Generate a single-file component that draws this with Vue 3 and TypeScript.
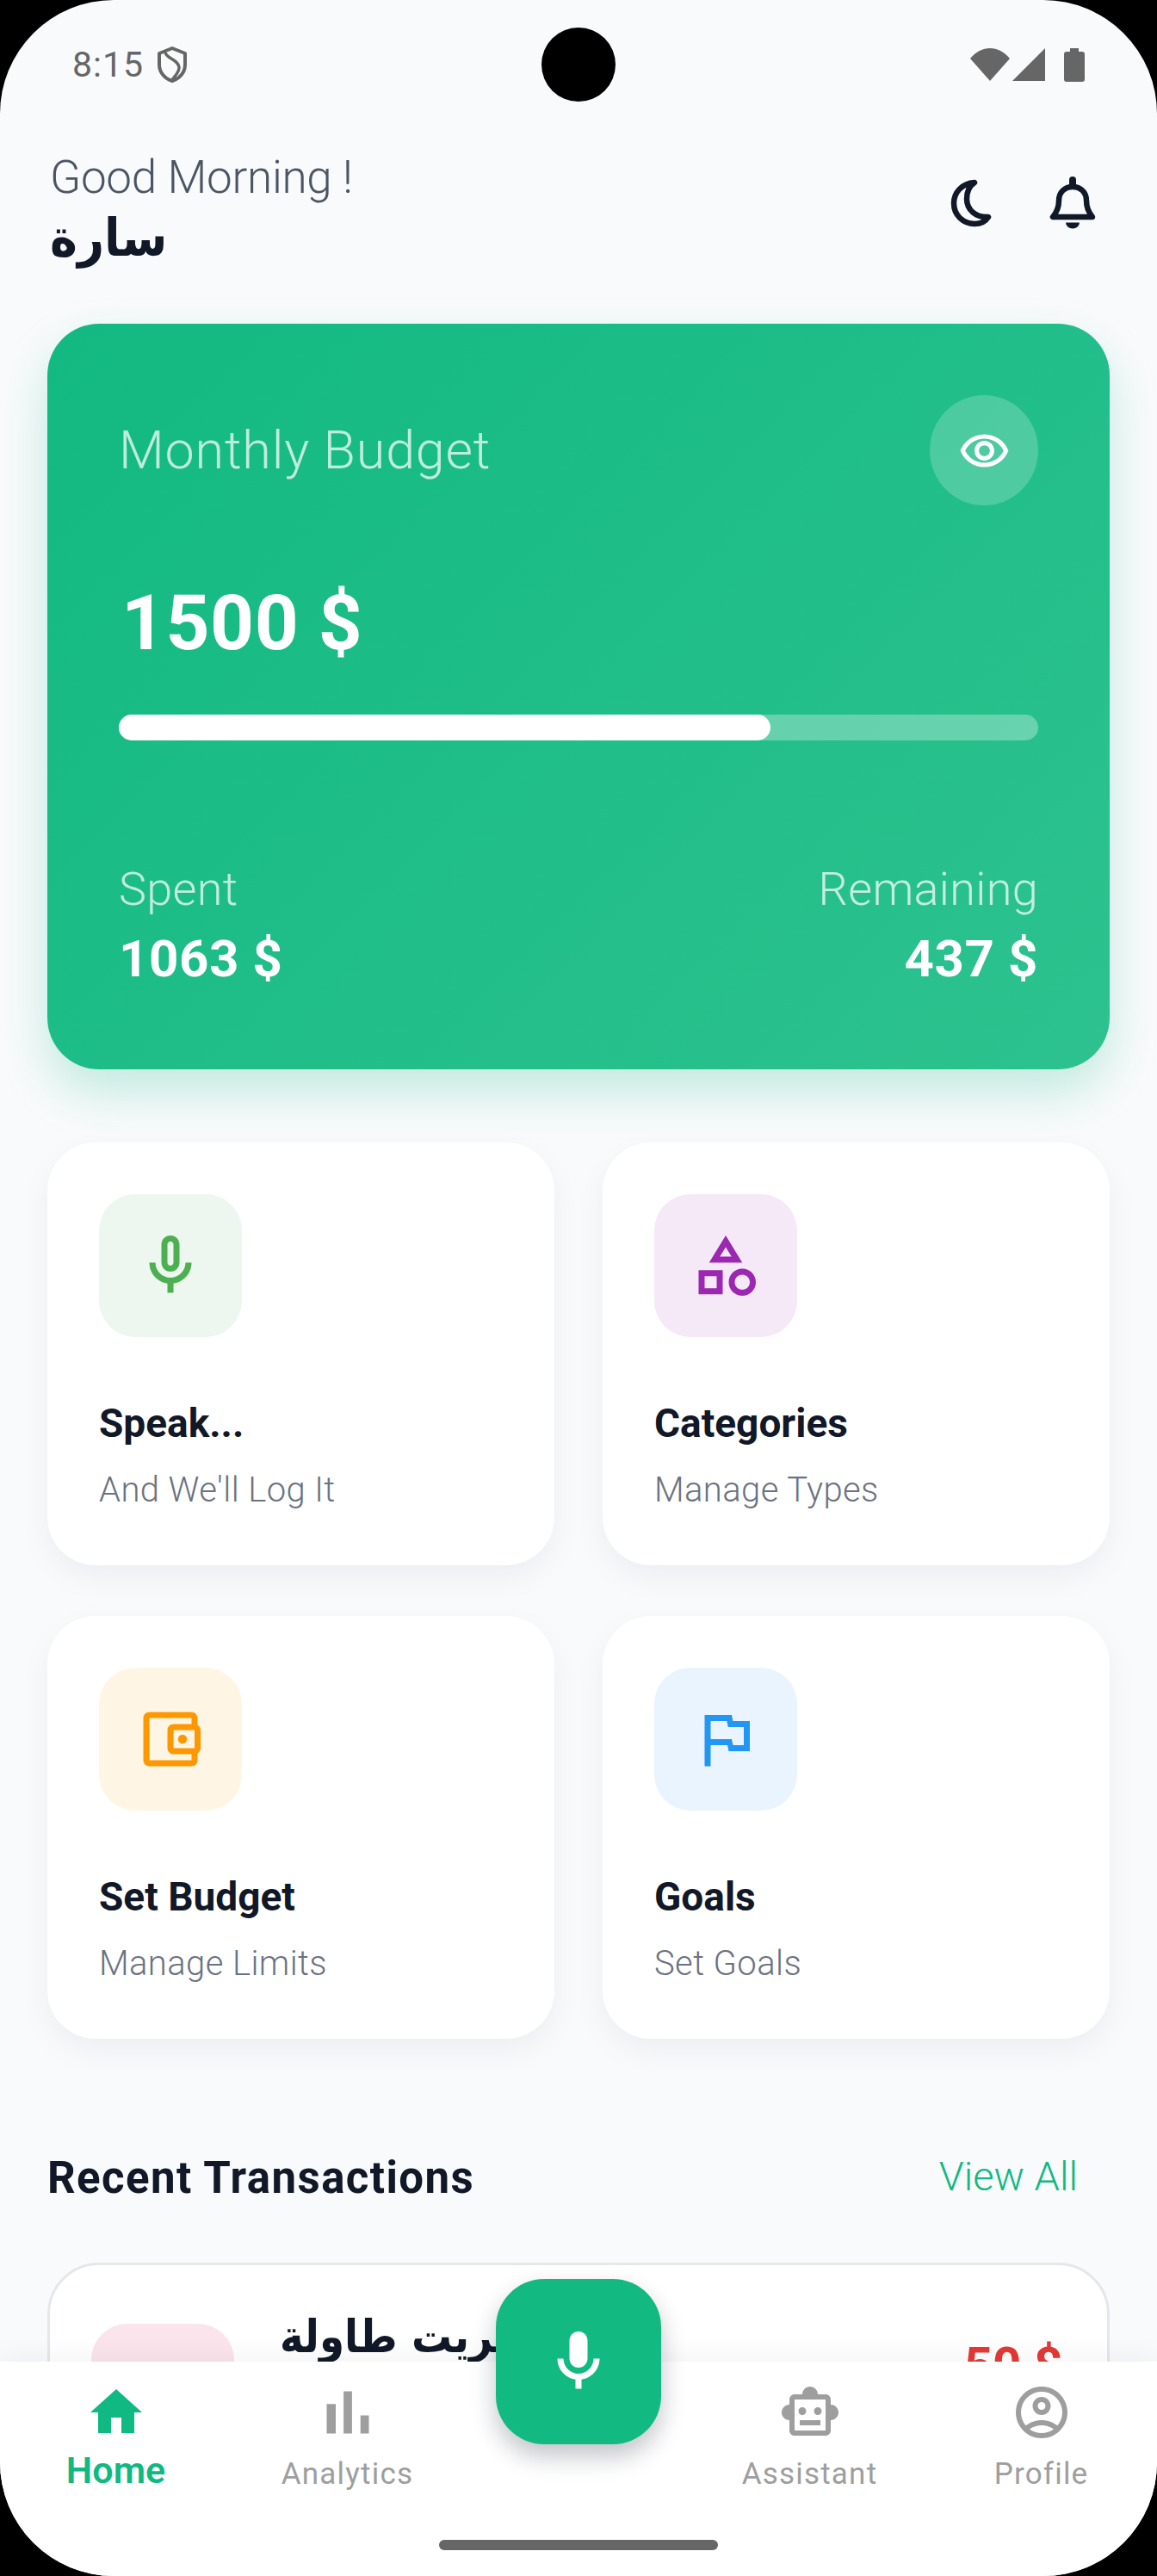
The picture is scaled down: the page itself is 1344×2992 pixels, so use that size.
<script setup lang="ts">
interface Feature {
  title: string;
  sub: string;
  color: string;
  tint: string;
  paths: string[];
}

interface Tab {
  label: string;
  size: number;
  active?: boolean;
  paths: string[];
}

const budget = 1500;
const spent = 1063;
const progress = `${(spent / budget) * 100}%`;

const features: Feature[] = [
  {
    title: 'Speak...',
    sub: "And We'll Log It",
    color: '#4caf50',
    tint: '#edf7ef',
    paths: [
      'M12 14c1.66 0 3-1.34 3-3V5c0-1.66-1.34-3-3-3S9 3.34 9 5v6c0 1.66 1.34 3 3 3zm-1-9c0-.55.45-1 1-1s1 .45 1 1v6c0 .55-.45 1-1 1s-1-.45-1-1V5zm6 6c0 2.76-2.24 5-5 5s-5-2.24-5-5H5c0 3.53 2.61 6.43 6 6.92V21h2v-3.08c3.39-.49 6-3.39 6-6.92h-2z',
    ],
  },
  {
    title: 'Categories',
    sub: 'Manage Types',
    color: '#9c27b0',
    tint: '#f5e9f7',
    paths: [
      'M12 2l-5.5 9h11L12 2zm0 3.84L13.93 9h-3.87L12 5.84zM17.5 13c-2.49 0-4.5 2.01-4.5 4.5s2.01 4.5 4.5 4.5 4.5-2.01 4.5-4.5-2.01-4.5-4.5-4.5zm0 7c-1.38 0-2.5-1.12-2.5-2.5s1.12-2.5 2.5-2.5 2.5 1.12 2.5 2.5-1.12 2.5-2.5 2.5zM3 21.5h8v-8H3v8zm2-6h4v4H5v-4z',
    ],
  },
  {
    title: 'Set Budget',
    sub: 'Manage Limits',
    color: '#ff9800',
    tint: '#fff5e5',
    paths: [
      'M21 7.28V5c0-1.1-.9-2-2-2H5c-1.11 0-2 .9-2 2v14c0 1.1.89 2 2 2h14c1.1 0 2-.9 2-2v-2.28c.59-.35 1-.98 1-1.72V9c0-.74-.41-1.38-1-1.72zM20 9v6h-7V9h7zM5 19V5h14v2h-6c-1.1 0-2 .9-2 2v6c0 1.1.9 2 2 2h6v2H5z',
      'M16 10.5a1.5 1.5 0 1 0 0 3 1.5 1.5 0 0 0 0-3z',
    ],
  },
  {
    title: 'Goals',
    sub: 'Set Goals',
    color: '#2196f3',
    tint: '#e9f4fe',
    paths: ['M14.4 6L14 4H5v17h2v-7h5.6l.4 2h7V6h-5.4zm3.6 8h-3.6l-.4-2H7V6h5.4l.4 2H18v6z'],
  },
];

const leftTabs: Tab[] = [
  { label: 'Home', size: 72, active: true, paths: ['M10 20v-6h4v6h5v-8h3L12 3 2 12h3v8z'] },
  { label: 'Analytics', size: 84, paths: ['M5 9.2h3V19H5zM10.6 5h2.8v14h-2.8zm5.6 8H19v6h-2.8z'] },
];

const rightTabs: Tab[] = [
  {
    label: 'Assistant',
    size: 72,
    paths: [
      'M20 9V7c0-1.1-.9-2-2-2h-3c0-1.66-1.34-3-3-3S9 3.34 9 5H6c-1.1 0-2 .9-2 2v2c-1.66 0-3 1.34-3 3s1.34 3 3 3v4c0 1.1.9 2 2 2h12c1.1 0 2-.9 2-2v-4c1.66 0 3-1.34 3-3s-1.34-3-3-3zm-2 10H6V7h12v12zm-9-6c-.83 0-1.5-.67-1.5-1.5S8.17 10 9 10s1.5.67 1.5 1.5S9.83 13 9 13zm7.5-1.5c0 .83-.67 1.5-1.5 1.5s-1.5-.67-1.5-1.5.67-1.5 1.5-1.5 1.5.67 1.5 1.5zM8 15h8v2H8v-2z',
    ],
  },
  {
    label: 'Profile',
    size: 72,
    paths: [
      'M12 2C6.48 2 2 6.48 2 12s4.48 10 10 10 10-4.48 10-10S17.52 2 12 2zM7.35 18.5C8.66 17.56 10.26 17 12 17s3.34.56 4.65 1.5c-1.31.94-2.91 1.5-4.65 1.5s-3.34-.56-4.65-1.5zm10.79-1.38C16.45 15.8 14.32 15 12 15s-4.45.8-6.14 2.12C4.7 15.73 4 13.95 4 12c0-4.42 3.58-8 8-8s8 3.58 8 8c0 1.95-.7 3.73-1.86 5.12z',
      'M12 6c-1.93 0-3.5 1.57-3.5 3.5S10.07 13 12 13s3.5-1.57 3.5-3.5S13.93 6 12 6zm0 5c-.83 0-1.5-.67-1.5-1.5S11.17 8 12 8s1.5.67 1.5 1.5S12.83 11 12 11z',
    ],
  },
];

const micPath =
  'M12 14c1.66 0 3-1.34 3-3V5c0-1.66-1.34-3-3-3S9 3.34 9 5v6c0 1.66 1.34 3 3 3zm5-3c0 2.76-2.24 5-5 5s-5-2.24-5-5H5c0 3.53 2.61 6.43 6 6.92V21h2v-3.08c3.39-.49 6-3.39 6-6.92h-2z';
</script>

<template>
  <div class="phone">
    <div class="camera"></div>

    <div class="status">
      <div class="status-left">
        <span class="time">8:15</span>
        <svg class="shield" width="34" height="42" viewBox="0 0 34 42" fill="none" stroke="#666" stroke-width="4" stroke-linejoin="round">
          <path d="M17 2 L32 8 V21 C32 30 26 37 17 40 C8 37 2 30 2 21 V8 Z" />
          <path d="M9 7 C10 14 24 15 25 24 C25.500 30 20 34 17 39" stroke-width="3.500" />
        </svg>
      </div>
      <div class="status-right">
        <svg width="46" height="40" viewBox="0 0 46 40"><path d="M0 13 C13 -3 33 -3 46 13 L23 39 Z" fill="#666" /></svg>
        <svg class="signal" width="38" height="38" viewBox="0 0 38 38"><path d="M38 0 V38 H0 Z" fill="#666" /></svg>
        <svg class="battery" width="24" height="39" viewBox="0 0 24 39"><path d="M7 0 H17 V4 H21 Q24 4 24 7 V36 Q24 39 21 39 H3 Q0 39 0 36 V7 Q0 4 3 4 H7 Z" fill="#666" /></svg>
      </div>
    </div>

    <header class="top">
      <div class="hello">
        <div class="greet">Good Morning !</div>
        <div class="name">سارة</div>
      </div>
      <div class="top-actions">
        <svg width="60" height="70" viewBox="0 0 60 70" fill="none" stroke="#111827" stroke-width="6.500" stroke-linejoin="round">
          <path d="M34 12 C19 13 10 24 10 36 C10 50 21 60 34 60 C41 60 47 57 50 52 C36 53 25 44 25 31 C25 23 28 16 34 12 Z" />
        </svg>
        <svg width="60" height="70" viewBox="0 0 60 70" fill="none" stroke="#111827" stroke-width="6.500" stroke-linejoin="round" stroke-linecap="round">
          <path d="M7 52 H53 C48 46 46 40 46 33 C46 23 39 17 30 17 C21 17 14 23 14 33 C14 40 12 46 7 52 Z" />
          <path d="M30 9 V15" stroke-width="8" />
          <path d="M22 58.500 H38 A8 7 0 0 1 22 58.500 Z" fill="#111827" stroke="none" />
        </svg>
      </div>
    </header>

    <main class="content">
      <section class="budget">
        <div class="budget-head">
          <span class="budget-label">Monthly Budget</span>
          <button class="eye" type="button">
            <svg width="61" height="61" viewBox="0 0 24 24" fill="#fff">
              <path d="M12 6.500c3.790 0 7.170 2.130 8.820 5.500-1.650 3.370-5.020 5.500-8.820 5.500S4.830 15.370 3.180 12C4.830 8.630 8.210 6.500 12 6.500m0-2C7 4.500 2.730 7.610 1 12c1.730 4.390 6 7.500 11 7.500s9.270-3.110 11-7.500c-1.730-4.390-6-7.500-11-7.500zm0 5c1.380 0 2.500 1.120 2.500 2.500s-1.120 2.500-2.500 2.500-2.500-1.120-2.500-2.500 1.120-2.500 2.500-2.500m0-2c-2.480 0-4.500 2.020-4.500 4.500s2.020 4.500 4.500 4.500 4.500-2.020 4.500-4.500-2.020-4.500-4.500-4.500z" />
            </svg>
          </button>
        </div>
        <div class="budget-total">{{ budget }} $</div>
        <div class="track">
          <div class="fill" :style="{ width: progress }"></div>
        </div>
        <div class="budget-split">
          <div>
            <div class="split-label">Spent</div>
            <div class="split-value">{{ spent }} $</div>
          </div>
          <div class="align-end">
            <div class="split-label">Remaining</div>
            <div class="split-value">{{ budget - spent }} $</div>
          </div>
        </div>
      </section>

      <section class="features">
        <div v-for="f in features" :key="f.title" class="feature">
          <div class="feature-icon" :style="{ background: f.tint }">
            <svg width="84" height="84" viewBox="0 0 24 24" :fill="f.color">
              <path v-for="d in f.paths" :key="d" :d="d" />
            </svg>
          </div>
          <div class="feature-title">{{ f.title }}</div>
          <div class="feature-sub">{{ f.sub }}</div>
        </div>
      </section>

      <section class="recent">
        <div class="recent-head">
          <h2>Recent Transactions</h2>
          <span class="view-all">View All</span>
        </div>
        <div class="tx">
          <div class="tx-icon"></div>
          <div class="tx-title">اشتريت طاولة</div>
          <div class="tx-amount">-50 $</div>
        </div>
      </section>
    </main>

    <nav class="tabs">
      <div v-for="t in leftTabs" :key="t.label" class="tab" :class="{ active: t.active }">
        <div class="tab-icon">
          <svg :width="t.size" :height="t.size" viewBox="0 0 24 24" fill="currentColor">
            <path v-for="d in t.paths" :key="d" :d="d" />
          </svg>
        </div>
        <span>{{ t.label }}</span>
      </div>
      <div class="tab-gap"></div>
      <div v-for="t in rightTabs" :key="t.label" class="tab">
        <div class="tab-icon">
          <svg :width="t.size" :height="t.size" viewBox="0 0 24 24" fill="currentColor">
            <path v-for="d in t.paths" :key="d" :d="d" />
          </svg>
        </div>
        <span>{{ t.label }}</span>
      </div>
    </nav>

    <button class="fab" type="button">
      <svg width="84" height="84" viewBox="0 0 24 24" fill="#fff"><path :d="micPath" /></svg>
    </button>

    <div class="home-bar"></div>
  </div>
</template>

<style>
html,
body {
  margin: 0;
  background: #000;
}
</style>

<style scoped>
.phone {
  position: relative;
  width: 1344px;
  height: 2992px;
  overflow: hidden;
  border-radius: 132px;
  background: #f9fafc;
  font-family: Roboto, "Noto Sans", "DejaVu Sans", sans-serif;
  color: #111827;
}

.camera {
  position: absolute;
  top: 32px;
  left: 629px;
  width: 86px;
  height: 86px;
  border-radius: 50%;
  background: #000;
}

.status {
  display: flex;
  justify-content: space-between;
  align-items: center;
  height: 150px;
  padding: 0 84px 0 84px;
  box-sizing: border-box;
}

.status-left,
.status-right {
  display: flex;
  align-items: center;
}

.status-left {
  gap: 16px;
}

.time {
  font-size: 41px;
  color: #666;
  letter-spacing: 1px;
}

.signal {
  margin-left: 3px;
}

.battery {
  margin-left: 22px;
}

.top {
  display: flex;
  justify-content: space-between;
  align-items: flex-start;
  height: 226px;
  padding: 24px 68px 0 58px;
  box-sizing: border-box;
}

.greet {
  font-size: 53px;
  line-height: 64px;
  font-weight: 300;
  color: #4b5563;
  letter-spacing: -0.3px;
}

.name {
  font-family: "DejaVu Sans Condensed", "DejaVu Sans", sans-serif;
  font-size: 60px;
  line-height: 76px;
  font-weight: 700;
}

.top-actions {
  display: flex;
  gap: 58px;
  padding-top: 26px;
}

.content {
  padding: 0 55px;
}

.budget {
  display: flex;
  flex-direction: column;
  box-sizing: border-box;
  height: 866px;
  padding: 83px 83px 0;
  border-radius: 60px;
  background: linear-gradient(135deg, #12b981, #2dc28f);
  box-shadow: 0 26px 56px rgba(16, 185, 129, 0.24);
  color: #fff;
}

.budget-head {
  display: flex;
  justify-content: space-between;
  align-items: center;
}

.budget-label {
  font-size: 61px;
  font-weight: 300;
  letter-spacing: 0.800px;
  color: rgba(255, 255, 255, 0.72);
}

.eye {
  display: flex;
  align-items: center;
  justify-content: center;
  width: 126px;
  height: 128px;
  padding: 0;
  border: 0;
  border-radius: 50%;
  background: rgba(255, 255, 255, 0.2);
}

.budget-total {
  margin-top: 85px;
  font-size: 89px;
  line-height: 104px;
  font-weight: 700;
  letter-spacing: 0.500px;
  padding-left: 3px;
}

.track {
  height: 30px;
  margin-top: 54px;
  border-radius: 15px;
  background: rgba(255, 255, 255, 0.3);
}

.fill {
  height: 100%;
  border-radius: 15px;
  background: #fff;
}

.budget-split {
  display: flex;
  justify-content: space-between;
  margin-top: 141px;
}

.align-end {
  text-align: right;
}

.split-label {
  font-size: 54px;
  line-height: 64px;
  font-weight: 300;
  letter-spacing: 0.300px;
  color: rgba(255, 255, 255, 0.72);
}

.split-value {
  margin-top: 14px;
  font-size: 60px;
  line-height: 70px;
  font-weight: 700;
  letter-spacing: 0.600px;
}

.features {
  display: grid;
  grid-template-columns: 589px 589px;
  gap: 59px 56px;
  margin-top: 85px;
}

.feature {
  height: 491px;
  box-sizing: border-box;
  padding: 60px;
  border-radius: 56px;
  background: #fff;
  box-shadow: 0 14px 36px rgba(17, 24, 39, 0.05);
}

.feature-icon {
  display: flex;
  align-items: center;
  justify-content: center;
  width: 166px;
  height: 166px;
  border-radius: 42px;
}

.feature-title {
  margin-top: 72px;
  font-size: 46px;
  line-height: 56px;
  font-weight: 700;
}

.feature-sub {
  margin-top: 25px;
  font-size: 40px;
  line-height: 50px;
  font-weight: 300;
  letter-spacing: 0.400px;
  color: #6b7280;
}

.recent {
  margin-top: 128px;
}

.recent-head {
  display: flex;
  justify-content: space-between;
  align-items: center;
  height: 70px;
  padding-right: 37px;
}

.recent-head h2 {
  margin: 0;
  font-size: 51px;
  font-weight: 700;
  letter-spacing: 1.400px;
  position: relative;
  top: -2px;
}

.view-all {
  font-size: 47px;
  font-weight: 300;
  color: #10b981;
  position: relative;
  top: -4px;
}

.tx {
  display: flex;
  align-items: flex-start;
  height: 300px;
  margin-top: 62px;
  padding: 68px 52px 0 48px;
  box-sizing: border-box;
  border: 3px solid #e5e7eb;
  border-radius: 60px;
  background: #fff;
}

.tx-icon {
  width: 166px;
  height: 166px;
  flex: none;
  border-radius: 42px;
  background: #fce4ec;
}

.tx-title {
  margin-left: 53px;
  font-family: "DejaVu Sans Condensed", "DejaVu Sans", sans-serif;
  font-size: 52px;
  line-height: 60px;
  font-weight: 700;
  margin-top: -15px;
}

.tx-amount {
  margin-left: auto;
  padding-top: 18px;
  font-size: 58px;
  line-height: 60px;
  font-weight: 700;
  color: #e53935;
}

.tabs {
  position: absolute;
  left: 0;
  right: 0;
  bottom: 0;
  top: 2743px;
  display: flex;
  background: #fff;
  box-shadow: 0 -6px 30px rgba(17, 24, 39, 0.05);
}

.tab {
  width: 269px;
  display: flex;
  flex-direction: column;
  align-items: center;
  font-size: 35px;
  letter-spacing: 1.200px;
  color: #9e9e9e;
}

.tab-icon {
  display: flex;
  align-items: center;
  justify-content: center;
  height: 84px;
  margin-top: 17px;
}

.tab span {
  margin-top: 9px;
}

.tab.active {
  color: #10b981;
  font-size: 43px;
  font-weight: 600;
  letter-spacing: 0;
}

.tab.active span {
  margin-top: 0;
}

.tab-gap {
  flex: none;
  width: 268px;
}

.fab {
  position: absolute;
  top: 2647px;
  left: 576px;
  display: flex;
  align-items: center;
  justify-content: center;
  width: 192px;
  height: 192px;
  padding: 0;
  border: 0;
  border-radius: 56px;
  background: #12ba82;
  box-shadow: 0 14px 28px rgba(17, 24, 39, 0.25);
}

.home-bar {
  position: absolute;
  top: 2950px;
  left: 510px;
  width: 324px;
  height: 12px;
  border-radius: 6px;
  background: #666;
}
</style>
